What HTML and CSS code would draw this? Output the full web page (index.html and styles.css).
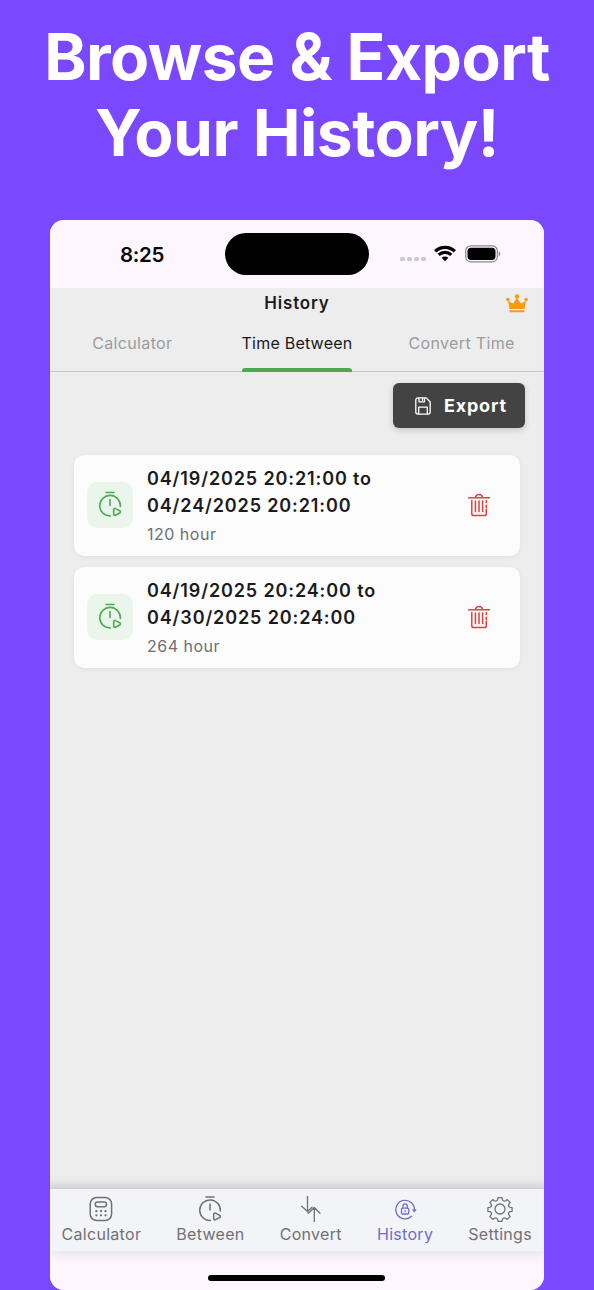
FILE: index.html
```html
<!DOCTYPE html>
<html lang="en">
<head>
<meta charset="utf-8">
<title>History</title>
<link rel="stylesheet" href="styles.css">
</head>
<body>
<svg class="defs" aria-hidden="true">
  <symbol id="timer" viewBox="0 0 24 26">
    <path d="M8 1.500h8M12 8.500v6M12.500 25A10.300 10.300 0 1 1 22.300 15.500"/>
    <path d="M15.700 18.600c0-1 .9-1.500 1.800-1l4.200 2.200c1 .6 1 1.700 0 2.200l-4.200 2.200c-.9.5-1.800 0-1.800-1z"/>
  </symbol>
  <symbol id="trash" viewBox="0 0 22 24">
    <path d="M.5 4.800h21M7.600 4.500C7.800 2.400 9 1.500 11 1.500s3.200.9 3.400 3M3.800 7.500v13.200c0 1.200.6 1.800 1.800 1.800h10.900c1.200 0 1.800-.6 1.800-1.800v-4.400M18.300 12.200v2.200M18.300 7.400v2M7.400 8v10.500M11 8v10.500M14.600 8v10.500"/>
  </symbol>
</svg>
<h1 class="headline">Browse &amp; Export<br>Your History!</h1>
<main class="phone">
  <div class="status">
    <span class="clock">8:25</span>
    <div class="island"></div>
    <div class="signals">
      <div class="dots"><i></i><i></i><i></i><i></i></div>
      <svg class="wifi" viewBox="0 0 22 17"><path d="M1.200 6.300a14 14 0 0 1 19.600 0M4.700 9.900a9 9 0 0 1 12.600 0"/><path class="fill" d="M11 16.200 7.600 12.800a4.900 4.900 0 0 1 6.800 0z"/></svg>
      <svg class="battery" viewBox="0 0 36 18"><rect class="shell" x=".7" y=".8" width="31.600" height="16" rx="5"/><rect x="2.500" y="2.700" width="28" height="12.200" rx="3.600"/><path class="tip" d="M33.700 6.200c2 .5 2 4.700 0 5.200z"/></svg>
    </div>
  </div>
  <header class="header">
    <h2 class="title">History</h2>
    <svg class="crown" viewBox="0 0 22 19"><path d="M3.500 15 2.100 7l4.900 2.600L11 4l4 5.600L19.900 7l-1.400 8zM3.500 16.300h15v2h-15z"/><circle cx="11" cy="2.500" r="2.200"/><circle cx="1.900" cy="5.600" r="1.800"/><circle cx="20.100" cy="5.600" r="1.800"/></svg>
  </header>
  <nav class="tabs">
    <div class="tab"><span>Calculator</span></div>
    <div class="tab active"><span>Time Between</span></div>
    <div class="tab"><span>Convert Time</span></div>
  </nav>
  <section class="content">
    <button class="export">
      <svg class="save" viewBox="0 0 16 18"><path d="M3 .9h8.300L15.200 5v10c0 1.300-.8 2.100-2.100 2.100H3C1.600 17.100.8 16.300.8 15V3C.8 1.700 1.600.9 3 .9zM4 1v3.800h5.500V1M7.500 1.800v1.600M3.700 17v-6.800h8.600V17"/></svg>
      <span>Export</span>
    </button>
    <div class="list">
      <article class="card">
        <div class="badge"><svg class="timer"><use href="#timer"/></svg></div>
        <div class="info"><p class="range">04/19/2025 20:21:00 to</p><p class="range">04/24/2025 20:21:00</p><p class="hours">120 hour</p></div>
        <svg class="trash"><use href="#trash"/></svg>
      </article>
      <article class="card">
        <div class="badge"><svg class="timer"><use href="#timer"/></svg></div>
        <div class="info"><p class="range">04/19/2025 20:24:00 to</p><p class="range">04/30/2025 20:24:00</p><p class="hours">264 hour</p></div>
        <svg class="trash"><use href="#trash"/></svg>
      </article>
    </div>
  </section>
  <nav class="bottom">
    <div class="item"><svg class="icon" viewBox="0 0 26 26"><rect x="2.200" y="1.500" width="21.400" height="23" rx="6.500"/><rect x="7.300" y="6" width="11.200" height="4.700" rx="2.200"/><path class="keys" d="M8.300 15.200h.1M12.900 15.200h.1M17.500 15.200h.1M8.300 19.300h.1M12.900 19.300h.1M17.500 19.300h.1"/></svg><span>Calculator</span></div>
    <div class="item"><svg class="icon" viewBox="-1 .5 26 26"><use href="#timer" width="24" height="26"/></svg><span>Between</span></div>
    <div class="item"><svg class="icon thin" viewBox="0 0 26 26"><path d="M9.500 0v16M3.700 10.200l5.800 5.300 4.500-4.200M16.300 26V12M10.300 17.200l6-5.700 5.700 5.700"/></svg><span>Convert</span></div>
    <div class="item current"><svg class="icon thin" viewBox="0 0 26 26"><path d="M19.600 20.300A9.300 9.300 0 1 1 22.400 14.500"/><path class="arrow" d="M20.600 13.700h3.600l-1.700 2.300z"/><rect x="9.500" y="12.200" width="7.200" height="5.800" rx="1"/><path d="M10.900 12v-1.900c0-3 4.400-3 4.400 0V12M13.100 14.700v.8"/></svg><span>History</span></div>
    <div class="item"><svg class="icon thin" viewBox="0 0 26 26"><circle cx="13" cy="13" r="5"/><path d="M10.600 3.600 11 1.600h4l.4 2q.3 1 1.300 1.400t1.900-.2l1.700-1.200 2.800 2.800-1.200 1.700q-.6.9-.2 1.900t1.400 1.300l2 .4v3.600l-2 .4q-1 .3-1.400 1.300t.2 1.900l1.200 1.700-2.800 2.800-1.700-1.200q-.9-.6-1.900-.2t-1.300 1.400l-.4 2h-4l-.4-2q-.3-1-1.300-1.400t-1.900.2l-1.700 1.200-2.800-2.800 1.200-1.700q.6-.9.2-1.900t-1.400-1.300l-2-.4v-3.600l2-.4q1-.3 1.400-1.300t-.2-1.900L2.900 6.400l2.800-2.800 1.700 1.200q.9.600 1.900.2t1.300-1.400z"/></svg><span>Settings</span></div>
  </nav>
  <div class="homearea"><div class="homebar"></div></div>
</main>
</body>
</html>
```
FILE: styles.css
```css
* { box-sizing: border-box; }
body {
  margin: 0;
  height: 1290px;
  overflow: hidden;
  background: #7a48ff;
  font-family: Inter, "Liberation Sans", sans-serif;
  color: #1b1b1d;
}
h1, h2, p { margin: 0; }
svg { display: block; fill: none; stroke: currentColor; stroke-linecap: round; stroke-linejoin: round; flex: none; }
.defs { position: absolute; width: 0; height: 0; }
.headline {
  height: 220px;
  padding-top: 19px;
  text-align: center;
  color: #fff;
  font-size: 64px;
  line-height: 76px;
  font-weight: 700;
  letter-spacing: -.5px;
  white-space: nowrap;
}
.phone {
  display: flex;
  flex-direction: column;
  width: 494px;
  height: 1070px;
  margin-left: 50px;
  background: #ededed;
  border-radius: 14px;
  overflow: hidden;
}
.status {
  display: grid;
  grid-template-columns: 175px 144px 1fr;
  align-items: center;
  height: 68px;
  background: #fdf6ff;
}
.clock { padding-left: 70px; font-size: 20.500px; font-weight: 600; letter-spacing: -.3px; color: #08080a; }
.island { height: 42px; border-radius: 21px; background: #000; }
.signals { display: flex; align-items: center; padding-left: 31px; color: #000; }
.dots { display: flex; gap: 2.500px; padding-top: 10px; }
.dots i { width: 4.500px; height: 4.500px; border-radius: 1.500px; background: #cdc7cf; }
.wifi { width: 22px; height: 17px; margin: 0 9px 2px 8.500px; stroke-width: 3.300; stroke-linecap: butt; }
.wifi .fill { fill: #000; stroke: none; }
.battery { width: 36px; height: 18px; fill: #000; stroke: none; }
.battery .shell { fill: none; stroke: #8d898f; stroke-width: 1.200; }
.battery .tip { fill: #8d898f; }
.header { display: grid; grid-template-columns: 1fr auto 1fr; align-items: center; height: 29px; }
.title { grid-column: 2; font-size: 17px; line-height: 24px; font-weight: 600; letter-spacing: .8px; }
.crown { width: 22px; height: 19px; justify-self: end; margin: 1px 16px 0 0; fill: #f99b0c; stroke: none; }
.tabs { display: grid; grid-template-columns: repeat(3, 1fr); height: 55px; border-bottom: 1px solid #c6c5ca; }
.tab { display: flex; justify-content: center; font-size: 16px; line-height: 53px; letter-spacing: .35px; color: #9c9c9c; white-space: nowrap; }
.tab span { height: 55px; }
.tab.active { color: #19191b; letter-spacing: .22px; }
.tab.active span { display: flex; flex-direction: column; }
.tab.active span::after {
  content: "";
  height: 4px;
  margin-top: -2px;
  flex: none;
  border-radius: 3px 3px 0 0;
  background: #4fa754;
}
.content { flex: 1; display: flex; flex-direction: column; padding: 11px 19px 0 24px; box-shadow: inset 0 -12px 10px -8px #d4d4d4; }
.export {
  align-self: flex-end;
  display: flex;
  align-items: center;
  gap: 13px;
  width: 132px;
  height: 45px;
  padding: 0 0 0 22px;
  border: 0;
  border-radius: 6px;
  background: #434343;
  box-shadow: 0 2px 6px #0000002b;
  color: #fff;
  font: 700 18px Inter, sans-serif;
  letter-spacing: .8px;
}
.save { width: 16px; height: 18px; stroke-width: 1.300; }
.list { display: flex; flex-direction: column; gap: 11px; margin-top: 27px; width: 446px; }
.card {
  display: flex;
  align-items: center;
  height: 101px;
  padding: 0 30px 0 13px;
  border-radius: 10px;
  background: #fcfcfc;
  box-shadow: 0 1px 5px #00000010;
}
.badge { display: grid; place-items: center; width: 46px; height: 46px; margin-bottom: 1px; padding-bottom: 2px; border-radius: 10px; background: #eaf5eb; color: #4cad50; }
.timer { width: 24px; height: 26px; stroke-width: 1.600; }
.info { flex: 1; margin-left: 14px; white-space: nowrap; padding-top: 2px; }
.range { font-size: 18px; line-height: 26.500px; font-weight: 600; letter-spacing: .88px; }
.hours { margin-top: 2px; font-size: 16px; line-height: 26px; letter-spacing: .5px; color: #6f6f6f; }
.trash { width: 22px; height: 24px; margin-bottom: 2px; stroke-width: 1.500; color: #d3473f; }
.bottom {
  position: relative;
  display: flex;
  justify-content: space-between;
  height: 62px;
  padding: 7px 12px 0 11.500px;
  background: #f3f4f8;
  box-shadow: 0 2px 12px #0000001c;
}
.item { display: flex; flex-direction: column; align-items: center; color: #717174; font-size: 16px; line-height: 24px; letter-spacing: .3px; }
.item.current { color: #716dc8; }
.icon { width: 26px; height: 26px; stroke-width: 1.500; }
.icon.thin { stroke-width: 1.300; }
.arrow { fill: currentColor; stroke-width: .6; }
.keys { stroke-width: 2.200; }
.homearea { height: 39px; padding-top: 24px; background: #fdf6ff; }
.homebar { width: 177px; height: 6px; margin: 0 0 0 158px; border-radius: 3px; background: #000; }
```
